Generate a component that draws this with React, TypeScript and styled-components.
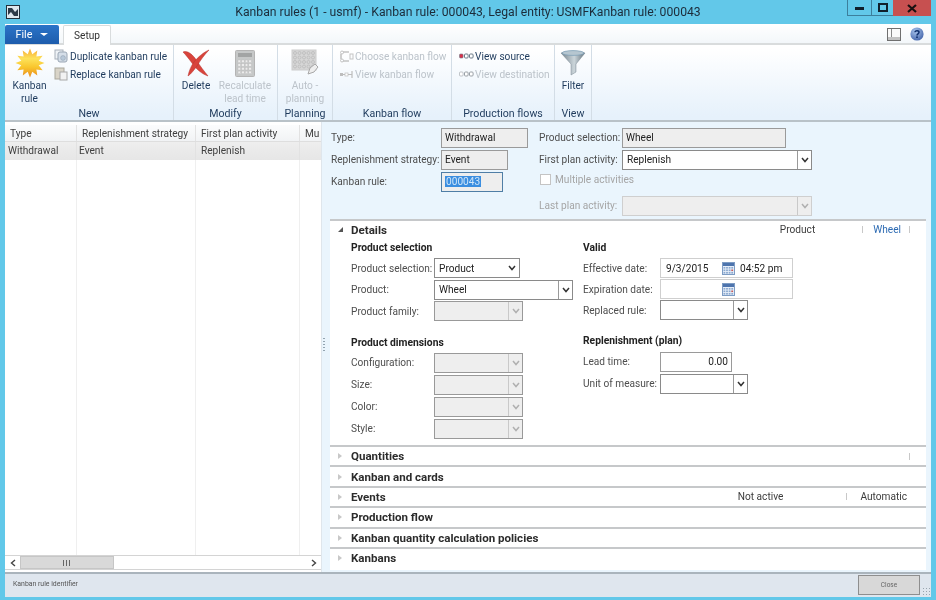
import React from "react";
import styled, { createGlobalStyle } from "styled-components";

const Global = createGlobalStyle`
  html, body { margin: 0; padding: 0; background: #62c8e9; }
  * { box-sizing: border-box; }
`;

const Win = styled.div`
  width: 936px; height: 600px; background: #62c8e9; padding: 0 5px 3px 5px;
  display: flex; flex-direction: column; overflow: hidden;
  font-family: Roboto, "Open Sans", sans-serif; font-size: 10.15px; color: #3a3a3a;
  filter: blur(0.45px);
`;
const TitleBar = styled.div`
  height: 24px; flex: none; position: relative; display: flex; align-items: center; justify-content: center;
  font-size: 12.2px; color: #1c2c3a;
`;
const AppIcon = styled.svg` position: absolute; left: 1px; top: 5px; `;
const WinButtons = styled.div` position: absolute; right: 0; top: 0; display: flex; height: 16px; `;
const WinBtn = styled.div<{ $w: number; $close?: boolean }>`
  width: ${p => p.$w}px; height: 16px; display: flex; align-items: center; justify-content: center;
  background: ${p => (p.$close ? "#c75050" : "transparent")};
  border: ${p => (p.$close ? "0" : "1px solid #3c7f9c")}; border-top: 0;
  border-right: 0;
`;

const TabStrip = styled.div`
  height: 21px; flex: none; background: linear-gradient(#ffffff, #f3f7fa); border-bottom: 2px solid #d9dcdd;
  display: flex; align-items: flex-end; position: relative;
`;
const FileTab = styled.div`
  width: 54px; height: 19px; margin-top: 1px; align-self: flex-start;
  background: linear-gradient(#2b74c8, #1d5cac); border-radius: 2px 2px 0 0; color: #fff;
  display: flex; align-items: center; justify-content: center; gap: 8px; font-size: 10.8px;
`;
const FileCaret = styled.span`
  width: 0; height: 0; border-left: 4px solid transparent; border-right: 4px solid transparent; border-top: 3px solid #fff;
`;
const SetupTab = styled.div`
  width: 48px; height: 20px; margin-left: 4px; margin-bottom: -2px; background: #fff;
  border: 1px solid #d9dcdd; border-bottom: 0; border-radius: 2px 2px 0 0;
  display: flex; align-items: center; justify-content: center; font-size: 10.15px; color: #333;
`;
const StripIcons = styled.div`
  position: absolute; right: 7px; top: 3px; display: flex; align-items: center; gap: 9px;
`;

const Ribbon = styled.div`
  height: 77px; flex: none; display: flex;
  background: linear-gradient(#ffffff 5%, #e6f1fb 95%); border-bottom: 2px solid #b9c2c8;
`;
const Group = styled.div<{ $w: number }>`
  width: ${p => p.$w}px; flex: none; display: flex; flex-direction: column; border-right: 1px solid #d3dde6;
`;
const GroupBody = styled.div` flex: 1; display: flex; min-height: 0; padding-top: 3px; `;
const GroupLabel = styled.div`
  height: 13px; flex: none; text-align: center; font-size: 10.6px; color: #1e3a5c; line-height: 14px;
`;
const LargeBtn = styled.div<{ $w: number; $off?: boolean }>`
  width: ${p => p.$w}px; flex: none; display: flex; flex-direction: column; align-items: center;
  font-size: 10.15px; line-height: 13px; text-align: center; color: ${p => (p.$off ? "#bcc3ca" : "#1e3a5c")};
`;
const LargeIcon = styled.div` height: 30px; margin-bottom: 1px; display: flex; align-items: center; justify-content: center; `;
const SmallCol = styled.div<{ $pl?: number }>`
  display: flex; flex-direction: column; gap: 4px; padding-top: 1px; padding-left: ${p => p.$pl ?? 0}px;
`;
const SmallBtn = styled.div<{ $off?: boolean }>`
  height: 14px; display: flex; align-items: center; gap: 1px; white-space: nowrap; font-size: 10.15px;
  color: ${p => (p.$off ? "#bcc3ca" : "#1e3a5c")};
`;

const Main = styled.div` flex: 1; display: flex; min-height: 0; background: #fff; `;
const GridPane = styled.div`
  width: 317px; flex: none; display: flex; flex-direction: column; background: #fff;
`;
const GridBody = styled.div` flex: 1; position: relative; display: flex; flex-direction: column; min-height: 0; `;
const GridHead = styled.div`
  height: 17px; flex: none; display: flex; background: linear-gradient(#fbfcfd, #f1f3f5); border-bottom: 1px solid #dedede; margin-top: 3px;
`;
const GridRow = styled.div`
  height: 18px; flex: none; display: flex; background: linear-gradient(#eeeeee, #e6e6e6);
`;
const Cell = styled.div<{ $w: number; $pl?: number }>`
  width: ${p => p.$w}px; flex: none; overflow: hidden; white-space: nowrap; line-height: 17px; font-size: 10.15px;
  padding-left: ${p => p.$pl ?? 3}px; color: #404040;
  border-right: 1px solid #e2e2e2;
`;
const GridFill = styled.div` flex: 1; display: flex; `;
const FillCol = styled.div<{ $w: number }>` width: ${p => p.$w}px; flex: none; border-right: 1px solid #efefef; `;
const ScrollBar = styled.div`
  height: 15px; flex: none; display: flex; border: 1px solid #d4d4d4; border-left: 0; background: #fff;
`;
const ScrollArrow = styled.div`
  width: 15px; flex: none; display: flex; align-items: center; justify-content: center; background: #fff;
`;
const ScrollThumb = styled.div`
  width: 94px; flex: none; background: #d9d9d9; border: 1px solid #c6c6c6; display: flex; align-items: center; justify-content: center; gap: 1px;
`;
const ThumbGrip = styled.span` width: 1px; height: 6px; background: #666; margin-right: 1px; `;
const ScrollTrack = styled.div` flex: 1; `;
const GridFooter = styled.div` height: 2px; flex: none; background: #fff; `;

const Splitter = styled.div`
  width: 8px; flex: none; margin-left: -1px; background: #eaf5fd; border-left: 1px solid #dfe6ec; position: relative;
`;
const SplitDots = styled.div`
  position: absolute; left: 1px; top: 216px; width: 2px; height: 14px;
  background: repeating-linear-gradient(#93a4b0 0 1px, transparent 1px 3px);
`;

const Detail = styled.div` flex: 1; min-width: 0; display: flex; flex-direction: column; background: #eaf5fd; `;
const Header = styled.div` height: 97px; flex: none; display: flex; padding: 5px 0 0 2px; `;
const HeadCol = styled.div<{ $w: number }>` width: ${p => p.$w}px; flex: none; display: flex; flex-direction: column; gap: 1px; `;
const Row = styled.div<{ $h?: number; $mt?: number }>`
  height: ${p => p.$h ?? 21}px; margin-top: ${p => p.$mt ?? 0}px; display: flex; align-items: center; flex: none;
`;
const Label = styled.div<{ $w: number; $off?: boolean }>`
  width: ${p => p.$w}px; flex: none; font-size: 10.15px; color: ${p => (p.$off ? "#a5a5a5" : "#4e4e4e")}; white-space: nowrap;
`;
const Field = styled.div<{ $w: number; $ro?: boolean; $off?: boolean; $focus?: boolean; $right?: boolean }>`
  width: ${p => p.$w}px; height: 20px; flex: none; display: flex; align-items: center; font-size: 10.15px; color: #222;
  padding: 0 3px; white-space: nowrap; justify-content: ${p => (p.$right ? "flex-end" : "flex-start")};
  border: 1px solid ${p => (p.$focus ? "#4f7ea6" : p.$off ? "#c9c9c9" : "#9a9a9a")};
  background: ${p => (p.$ro || p.$focus ? "#eeeeee" : p.$off ? "#eeeeee" : "#fff")};
`;
const Sel = styled.span` background: #3b8ee0; color: #cfe6fa; padding: 0 1px; `;
const ComboBox = styled.div<{ $w: number; $off?: boolean; $soft?: boolean }>`
  width: ${p => p.$w}px; height: 20px; flex: none; display: flex; align-items: center; font-size: 10.15px; color: #222;
  border: 1px solid ${p => (p.$soft ? "#cfcfcf" : p.$off ? "#999" : "#8a8a8a")};
  background: ${p => (p.$off ? "#eeeeee" : "#fff")};
`;
const ComboText = styled.div` flex: 1; padding-left: 4px; white-space: nowrap; overflow: hidden; `;
const ComboArrow = styled.div<{ $off?: boolean; $plain?: boolean }>`
  width: 14px; height: 100%; flex: none; display: flex; align-items: center; justify-content: center;
  border-left: ${p => (p.$plain ? "0" : `1px solid ${p.$off ? "#c9c9c9" : "#9a9a9a"}`)};
`;
const CheckRow = styled.div` height: 17px; display: flex; align-items: center; gap: 4px; color: #a5a5a5; font-size: 10.15px; padding-left: 1px; `;
const CheckBox = styled.span` width: 11px; height: 11px; background: #fff; border: 1px solid #c4c4c4; `;
const DateField = styled.div`
  width: 133px; height: 20px; flex: none; display: flex; align-items: center; border: 1px solid #cfcfcf; background: #fff; font-size: 10.15px; color: #222;
`;
const DateText = styled.div` width: 61px; flex: none; padding-left: 5px; `;
const TimeText = styled.div` margin-left: 5px; `;

const Tabs = styled.div`
  flex: 1; margin: 0 5px 2px 1px; background: #fff; display: flex; flex-direction: column; min-height: 0;
`;
const TabHead = styled.div<{ $h?: number }>`
  height: ${p => p.$h ?? 20.4}px; flex: none; display: flex; align-items: center; padding-left: 8px; position: relative;
  border-top: 2px solid #c6c8ca; padding-right: 16px;
`;
const Tri = styled.span<{ $open?: boolean }>`
  width: 0; height: 0; flex: none; margin-right: 8px;
  ${p => p.$open
    ? "border-left: 5px solid transparent; border-bottom: 5px solid #555;"
    : "border-top: 3.5px solid transparent; border-bottom: 3.5px solid transparent; border-left: 4px solid #c8c8c8; margin-right: 9px;"}
`;
const TabTitle = styled.div` font-weight: 700; font-size: 11.55px; color: #2c2c2c; `;
const Summary = styled.div<{ $pr?: number }>`
  margin-left: auto; display: flex; align-items: center; font-size: 10.15px; color: #3c3c3c; padding-right: ${p => p.$pr ?? 0}px;
`;
const SumText = styled.div<{ $l?: number; $r?: number; $link?: boolean }>`
  margin-left: ${p => p.$l ?? 0}px; margin-right: ${p => p.$r ?? 0}px; color: ${p => (p.$link ? "#2d6bb3" : "#3c3c3c")};
`;
const Tick = styled.span` width: 1px; height: 7px; background: #c8c8c8; `;
const DetailsBody = styled.div` height: 206.5px; flex: none; display: flex; padding: 0 0 0 21px; `;
const FormCol = styled.div<{ $w: number }>` width: ${p => p.$w}px; flex: none; display: flex; flex-direction: column; `;
const GroupTitle = styled.div<{ $mt?: number; $mb?: number }>`
  font-weight: 700; font-size: 10.3px; color: #222; height: 15px; line-height: 15px;
  margin-top: ${p => p.$mt ?? 0}px; margin-bottom: ${p => p.$mb ?? 3}px;
`;
const Status = styled.div`
  height: 25px; flex: none; background: #dfe6ee; border-top: 2px solid #aab4bc; display: flex; align-items: center; justify-content: space-between;
  padding: 0 0 3px 8px; font-size: 6.9px; color: #555; position: relative;
`;
const CloseBtn = styled.div`
  width: 62px; height: 20px; margin-right: 11px; margin-top: 1px; background: #d8d8d8; border: 1px solid #8e8e8e;
  display: flex; align-items: center; justify-content: center; font-size: 6.5px; color: #666;
`;
const Grip = styled.div`
  position: absolute; right: 1px; bottom: 2px; width: 8px; height: 8px;
  background: radial-gradient(#98a4ae 40%, transparent 45%) 0 0 / 3px 3px;
`;

const Chev = ({ off }: { off?: boolean }) => (
  <svg width="8" height="6" viewBox="0 0 8 6">
    <path d="M1 1 L4 4.5 L7 1" fill="none" stroke={off ? "#b0b0b0" : "#333"} strokeWidth="1.5" />
  </svg>
);
const starPts = (() => {
  const p: string[] = [];
  for (let i = 0; i < 24; i++) {
    const r = i % 2 ? 9 : 14.5;
    const a = (i * Math.PI) / 12;
    p.push(`${(15 + r * Math.sin(a)).toFixed(1)},${(15 - r * Math.cos(a)).toFixed(1)}`);
  }
  return p.join(" ");
})();
const Sun = () => (
  <svg width="30" height="30" viewBox="0 0 30 30">
    <defs>
      <linearGradient id="sun" x1="0" y1="0" x2="0" y2="1">
        <stop offset="0" stopColor="#f7a834" /><stop offset="0.35" stopColor="#fde25a" /><stop offset="0.65" stopColor="#f9c52c" /><stop offset="1" stopColor="#e88a20" />
      </linearGradient>
    </defs>
    <polygon points={starPts} fill="url(#sun)" />
  </svg>
);
const RedX = () => (
  <svg width="28" height="28" viewBox="0 0 28 28">
    <path d="M1 3 C6 1 11 6 15 12 C18 17 22 22 26 27 C20 25 14 20 10 14 C7 10 4 6 1 3Z" fill="#d8443c" stroke="#b8322c" strokeWidth=".5" />
    <path d="M27 1 C22 3 16 8 12 13 C9 17 7 22 6 27 C9 25 12 21 15 17 C18 12 22 6 27 1Z" fill="#d8443c" stroke="#b8322c" strokeWidth=".5" />
  </svg>
);
const Calc = () => (
  <svg width="20" height="27" viewBox="0 0 20 27">
    <rect x=".5" y=".5" width="19" height="26" rx="1" fill="#c6c8c8" stroke="#b4b4b4" />
    <rect x="3" y="3" width="14" height="4" fill="#a2a4a4" />
    {[0, 1, 2, 3].map(r => [0, 1, 2, 3].map(c => (
      <rect key={`${r}${c}`} x={3 + c * 3.6} y={10 + r * 3.7} width="2.6" height="2.6" fill="#ececec" stroke="#bcbcbc" strokeWidth=".4" />
    )))}
  </svg>
);
const AutoPlan = () => (
  <svg width="28" height="28" viewBox="0 0 28 28">
    <rect x="1" y="1" width="24" height="20" fill="#d6d6d6" stroke="#cccccc" />
    {[0, 1, 2, 3].map(r => [0, 1, 2, 3, 4].map(c => (
      <circle key={`${r}${c}`} cx={4 + c * 4.5} cy={4 + r * 4.5} r="1.5" fill="none" stroke="#b8b8b8" strokeWidth=".7" />
    )))}
    <path d="M17 25 L19 19 L24 15 L27 18 L23 23 Z" fill="#eee" stroke="#a8a8a8" />
  </svg>
);
const Funnel = () => (
  <svg width="26" height="28" viewBox="0 0 26 28">
    <defs>
      <linearGradient id="fn" x1="0" x2="1"><stop offset="0" stopColor="#75838c" /><stop offset=".55" stopColor="#cbd5da" /><stop offset="1" stopColor="#64737d" /></linearGradient>
    </defs>
    <path d="M1 4 Q13 0 25 4 L16 15 L16 23 L11 26 L11 15 Z" fill="url(#fn)" stroke="#7d8b95" strokeWidth=".5" />
    <ellipse cx="13" cy="4" rx="11" ry="2.4" fill="#b6c6d0" stroke="#6f95b0" strokeWidth=".6" />
  </svg>
);
const Dup = () => (
  <svg width="15" height="14" viewBox="0 0 15 14">
    <rect x="1" y="1" width="8" height="9" fill="#eef2f6" stroke="#a8b0ba" />
    <rect x="4" y="3" width="9" height="10" rx="2" fill="#d5dee8" stroke="#9aa6b4" />
    <circle cx="9" cy="9" r="2.4" fill="#b8c8d8" stroke="#8a9aac" strokeWidth=".5" />
  </svg>
);
const Rep = () => (
  <svg width="15" height="14" viewBox="0 0 15 14">
    <rect x="1" y="1" width="9" height="11" fill="#d9d4c8" stroke="#aaa79c" />
    <rect x="6" y="5" width="7" height="8" fill="#f2f2f2" stroke="#a8a8a8" />
  </svg>
);
const FlowA = () => (
  <svg width="15" height="13" viewBox="0 0 15 13">
    <path d="M4 2 H10 M4 11 H10 M2 4 V9" stroke="#c4c4c4" strokeWidth="1.6" fill="none" />
    <rect x="11" y="4" width="3" height="5" fill="none" stroke="#c4c4c4" />
    <circle cx="3" cy="2.5" r="1.5" fill="none" stroke="#c4c4c4" />
    <circle cx="3" cy="10.5" r="1.5" fill="none" stroke="#c4c4c4" />
  </svg>
);
const FlowB = () => (
  <svg width="15" height="9" viewBox="0 0 15 9">
    <path d="M1 4.5 H13 M13 1 V8" stroke="#bdbdbd" strokeWidth="1.2" fill="none" />
    <rect x="1" y="3" width="3" height="3" fill="#bdbdbd" />
    <rect x="6" y="3" width="3" height="3" fill="#fff" stroke="#bdbdbd" strokeWidth=".7" />
  </svg>
);
const Dots = ({ c, o }: { c: string; o: string }) => (
  <svg width="15" height="6" viewBox="0 0 15 6">
    <rect x="0.5" y="1" width="3.6" height="4" rx="1" fill={c} stroke={o} strokeWidth=".6" />
    <rect x="5.5" y="1" width="3.6" height="4" rx="1" fill="#fff" stroke={o} strokeWidth="1" />
    <rect x="10.5" y="1" width="3.6" height="4" rx="1" fill="#fff" stroke={o} strokeWidth="1" />
  </svg>
);
const Cal = () => (
  <svg width="13" height="13" viewBox="0 0 13 13">
    <rect x=".5" y=".5" width="12" height="12" fill="#e6eef8" stroke="#7d9cc4" />
    <rect x="1" y="1" width="11" height="3" fill="#4d74ad" />
    {[0, 1, 2].map(r => [0, 1, 2, 3].map(c => (
      <rect key={`${r}${c}`} x={1.5 + c * 2.6} y={5 + r * 2.5} width="1.8" height="1.6" fill={c === 3 && r === 1 ? "#c45a5a" : "#8aa8cf"} />
    )))}
  </svg>
);
const Pane = () => (
  <svg width="14" height="13" viewBox="0 0 14 13">
    <rect x=".5" y=".5" width="13" height="12" fill="#fafafa" stroke="#6f6f6f" />
    <rect x="1" y="9" width="12" height="3" fill="#c2c2c2" />
    <path d="M4.5 1 V9" stroke="#888" />
  </svg>
);
const Help = () => (
  <svg width="14" height="14" viewBox="0 0 14 14">
    <defs><radialGradient id="h" cx=".4" cy=".3" r=".8"><stop offset="0" stopColor="#a8c4ec" /><stop offset="1" stopColor="#3c5ea6" /></radialGradient></defs>
    <circle cx="7" cy="7" r="6.6" fill="url(#h)" />
    <path d="M5 5.2 C5 3.2 9 3.2 9 5.3 C9 6.8 7 6.8 7 8.4" fill="none" stroke="#10306e" strokeWidth="1.5" />
    <rect x="6.2" y="9.4" width="1.6" height="1.6" fill="#10306e" />
  </svg>
);

const Combo = ({ w, text, off, plain, soft }: { w: number; text?: string; off?: boolean; plain?: boolean; soft?: boolean }) => (
  <ComboBox $w={w} $off={off} $soft={soft}>
    <ComboText>{text}</ComboText>
    <ComboArrow $off={off} $plain={plain}><Chev off={off} /></ComboArrow>
  </ComboBox>
);

export default function App() {
  return (
    <Win>
      <Global />
      <TitleBar>
        <AppIcon width="14" height="14" viewBox="0 0 14 14">
          <rect x=".5" y=".5" width="13" height="13" fill="#dfe8ee" stroke="#22303c" />
          <path d="M2 3 H6 L9 7 L12 4 V11 H8 L5 7 L2 10 Z" fill="#2c3a48" />
        </AppIcon>
        Kanban rules (1 - usmf) - Kanban rule: 000043, Legal entity: USMFKanban rule: 000043
        <WinButtons>
          <WinBtn $w={24}>
            <svg width="10" height="4"><rect width="9" height="3" y="1" fill="#10202c" /></svg>
          </WinBtn>
          <WinBtn $w={22}>
            <svg width="10" height="9"><rect x="1" y="1" width="8" height="7" fill="none" stroke="#10202c" strokeWidth="2" /></svg>
          </WinBtn>
          <WinBtn $w={38} $close>
            <svg width="10" height="9"><path d="M1 1 L9 8 M9 1 L1 8" stroke="#1a1010" strokeWidth="2.2" /></svg>
          </WinBtn>
        </WinButtons>
      </TitleBar>

      <TabStrip>
        <FileTab>File<FileCaret /></FileTab>
        <SetupTab>Setup</SetupTab>
        <StripIcons><Pane /><Help /></StripIcons>
      </TabStrip>

      <Ribbon>
        <Group $w={169}>
          <GroupBody>
            <LargeBtn $w={49}><LargeIcon><Sun /></LargeIcon>Kanban<br />rule</LargeBtn>
            <SmallCol>
              <SmallBtn><Dup />Duplicate kanban rule</SmallBtn>
              <SmallBtn><Rep />Replace kanban rule</SmallBtn>
            </SmallCol>
          </GroupBody>
          <GroupLabel>New</GroupLabel>
        </Group>
        <Group $w={104}>
          <GroupBody>
            <LargeBtn $w={44}><LargeIcon><RedX /></LargeIcon>Delete</LargeBtn>
            <LargeBtn $w={54} $off><LargeIcon><Calc /></LargeIcon>Recalculate<br />lead time</LargeBtn>
          </GroupBody>
          <GroupLabel>Modify</GroupLabel>
        </Group>
        <Group $w={55}>
          <GroupBody>
            <LargeBtn $w={54} $off><LargeIcon><AutoPlan /></LargeIcon>Auto -<br />planning</LargeBtn>
          </GroupBody>
          <GroupLabel>Planning</GroupLabel>
        </Group>
        <Group $w={119}>
          <GroupBody>
            <SmallCol $pl={6}>
              <SmallBtn $off><FlowA />Choose kanban flow</SmallBtn>
              <SmallBtn $off><FlowB />View kanban flow</SmallBtn>
            </SmallCol>
          </GroupBody>
          <GroupLabel>Kanban flow</GroupLabel>
        </Group>
        <Group $w={103}>
          <GroupBody>
            <SmallCol $pl={7}>
              <SmallBtn><Dots c="#d8304a" o="#6b7a88" />View source</SmallBtn>
              <SmallBtn $off><Dots c="#fff" o="#9aa0a6" />View destination</SmallBtn>
            </SmallCol>
          </GroupBody>
          <GroupLabel>Production flows</GroupLabel>
        </Group>
        <Group $w={37}>
          <GroupBody>
            <LargeBtn $w={36}><LargeIcon><Funnel /></LargeIcon>Filter</LargeBtn>
          </GroupBody>
          <GroupLabel>View</GroupLabel>
        </Group>
      </Ribbon>

      <Main>
        <GridPane>
          <GridBody>
            <GridHead>
              <Cell $w={72} $pl={5}>Type</Cell>
              <Cell $w={119} $pl={5}>Replenishment strategy</Cell>
              <Cell $w={104} $pl={5}>First plan activity</Cell>
              <Cell $w={22} $pl={5}>Mu</Cell>
            </GridHead>
            <GridRow>
              <Cell $w={72}>Withdrawal</Cell>
              <Cell $w={119} $pl={2}>Event</Cell>
              <Cell $w={104} $pl={5}>Replenish</Cell>
              <Cell $w={22} />
            </GridRow>
            <GridFill>
              <FillCol $w={72} /><FillCol $w={119} /><FillCol $w={104} />
            </GridFill>
            <ScrollBar>
              <ScrollArrow>
                <svg width="6" height="8"><path d="M5 1 L1.5 4 L5 7" fill="none" stroke="#444" strokeWidth="1.4" /></svg>
              </ScrollArrow>
              <ScrollThumb><ThumbGrip /><ThumbGrip /><ThumbGrip /></ScrollThumb>
              <ScrollTrack />
              <ScrollArrow>
                <svg width="6" height="8"><path d="M1 1 L4.5 4 L1 7" fill="none" stroke="#444" strokeWidth="1.4" /></svg>
              </ScrollArrow>
            </ScrollBar>
            <GridFooter />
          </GridBody>
        </GridPane>
        <Splitter><SplitDots /></Splitter>
        <Detail>
          <Header>
            <HeadCol $w={208}>
              <Row><Label $w={110}>Type:</Label><Field $w={87} $ro>Withdrawal</Field></Row>
              <Row><Label $w={110}>Replenishment strategy:</Label><Field $w={67} $ro>Event</Field></Row>
              <Row><Label $w={110}>Kanban rule:</Label><Field $w={62} $focus><Sel>000043</Sel></Field></Row>
            </HeadCol>
            <HeadCol $w={290}>
              <Row><Label $w={83}>Product selection:</Label><Field $w={164} $ro>Wheel</Field></Row>
              <Row><Label $w={83}>First plan activity:</Label><Combo w={190} text="Replenish" /></Row>
              <CheckRow><CheckBox />Multiple activities</CheckRow>
              <Row $mt={6}><Label $w={83} $off>Last plan activity:</Label><Combo w={190} off soft /></Row>
            </HeadCol>
          </Header>
          <Tabs>
            <TabHead $h={19.5}>
              <Tri $open /><TabTitle>Details</TabTitle>
              <Summary>
                <SumText $r={47}>Product</SumText><Tick /><SumText $l={10} $r={8} $link>Wheel</SumText><Tick />
              </Summary>
            </TabHead>
            <DetailsBody>
              <FormCol $w={232}>
                <GroupTitle $mt={1} $mb={3}>Product selection</GroupTitle>
                <Row $h={21.5}><Label $w={83}>Product selection:</Label><Combo w={86} text="Product" plain /></Row>
                <Row $h={21.5}><Label $w={83}>Product:</Label><Combo w={139} text="Wheel" /></Row>
                <Row $h={21.5}><Label $w={83}>Product family:</Label><Combo w={89} off /></Row>
                <GroupTitle $mt={12.5} $mb={2}>Product dimensions</GroupTitle>
                <Row $h={22}><Label $w={83}>Configuration:</Label><Combo w={89} off /></Row>
                <Row $h={22}><Label $w={83}>Size:</Label><Combo w={89} off /></Row>
                <Row $h={22}><Label $w={83}>Color:</Label><Combo w={89} off /></Row>
                <Row $h={22}><Label $w={83}>Style:</Label><Combo w={89} off /></Row>
              </FormCol>
              <FormCol $w={300}>
                <GroupTitle $mt={1} $mb={3}>Valid</GroupTitle>
                <Row><Label $w={77}>Effective date:</Label><DateField><DateText>9/3/2015</DateText><Cal /><TimeText>04:52 pm</TimeText></DateField></Row>
                <Row><Label $w={77}>Expiration date:</Label><DateField><DateText /><Cal /></DateField></Row>
                <Row><Label $w={77}>Replaced rule:</Label><Combo w={88} /></Row>
                <GroupTitle $mt={12} $mb={3}>Replenishment (plan)</GroupTitle>
                <Row $h={22}><Label $w={77}>Lead time:</Label><Field $w={72} $right>0.00</Field></Row>
                <Row $h={22}><Label $w={77}>Unit of measure:</Label><Combo w={88} /></Row>
              </FormCol>
            </DetailsBody>
            <TabHead>
              <Tri /><TabTitle>Quantities</TabTitle>
              <Summary><Tick /></Summary>
            </TabHead>
            <TabHead><Tri /><TabTitle>Kanban and cards</TabTitle></TabHead>
            <TabHead>
              <Tri /><TabTitle>Events</TabTitle>
              <Summary $pr={3}><SumText $r={63}>Not active</SumText><Tick /><SumText $l={13}>Automatic</SumText></Summary>
            </TabHead>
            <TabHead><Tri /><TabTitle>Production flow</TabTitle></TabHead>
            <TabHead><Tri /><TabTitle>Kanban quantity calculation policies</TabTitle></TabHead>
            <TabHead><Tri /><TabTitle>Kanbans</TabTitle></TabHead>
          </Tabs>
        </Detail>
      </Main>

      <Status>
        Kanban rule identifier
        <CloseBtn>Close</CloseBtn>
        <Grip />
      </Status>
    </Win>
  );
}
